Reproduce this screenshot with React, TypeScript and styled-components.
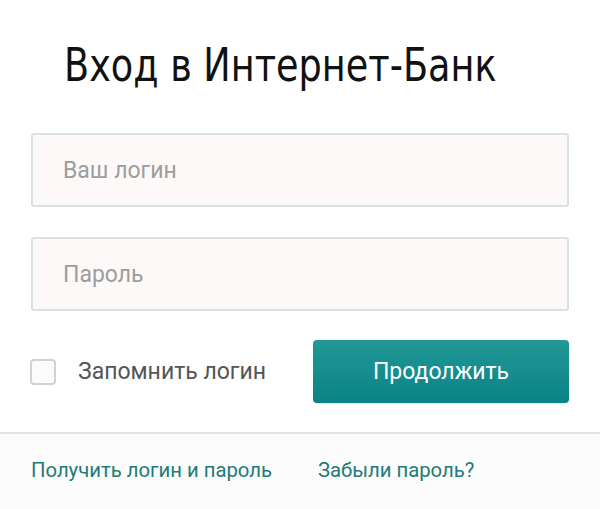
import React from "react";
import styled, { createGlobalStyle } from "styled-components";

const GlobalStyle = createGlobalStyle`
  html, body {
    margin: 0;
    padding: 0;
    background: #ffffff;
  }
  body {
    font-family: Roboto, "Liberation Sans", Arial, sans-serif;
    -webkit-font-smoothing: antialiased;
  }
  * { box-sizing: border-box; }
`;

const Page = styled.div`
  width: 600px;
  height: 509px;
  background: #ffffff;
  display: flex;
  flex-direction: column;
  overflow: hidden;
`;

const Main = styled.div`
  padding: 38px 31px 0 31px;
  display: flex;
  flex-direction: column;
`;

const Title = styled.h1`
  margin: 0 0 41px 33px;
  font-family: "DejaVu Sans Condensed", "Liberation Sans Narrow", "Liberation Sans", sans-serif;
  font-weight: 400;
  font-size: 46px;
  line-height: 54px;
  letter-spacing: 0;
  color: #111111;
  white-space: nowrap;
  transform: scaleX(0.885);
  transform-origin: left center;
`;

const Field = styled.input<{ $gap: number }>`
  display: block;
  width: 538px;
  height: 74px;
  margin: 0 0 ${(p) => p.$gap}px 0;
  padding: 0 0 0 30px;
  border: 2px solid #d9e1e1;
  border-radius: 3px;
  background: #fdf9f9;
  font-family: Roboto, "Liberation Sans", Arial, sans-serif;
  font-size: 23px;
  color: #333;
  outline: none;
  &::placeholder {
    color: #9d9d9d;
  }
`;

const ActionRow = styled.div`
  display: flex;
  align-items: center;
  justify-content: space-between;
  height: 63px;
`;

const RememberLabel = styled.label`
  display: flex;
  align-items: center;
  gap: 22px;
  font-size: 23px;
  color: #555555;
  cursor: pointer;
`;

const CheckBox = styled.span`
  display: inline-block;
  width: 26px;
  height: 26px;
  border: 2px solid #d2d2d2;
  border-radius: 4px;
  background: #fbfbfb;
  margin-left: -1px;
`;

const ContinueButton = styled.button`
  width: 256px;
  height: 63px;
  border: none;
  border-radius: 4px;
  background: linear-gradient(to bottom, #229897 0%, #0a8386 100%);
  color: #ffffff;
  font-family: Roboto, "Liberation Sans", Arial, sans-serif;
  font-size: 23px;
  cursor: pointer;
  box-shadow: 0 1px 1px rgba(0, 0, 0, 0.08);
`;

const Divider = styled.hr`
  margin: 29px 0 0 0;
  border: none;
  border-top: 2px solid #e2e4e4;
  width: 100%;
`;

const Footer = styled.div`
  flex: 1;
  background: #fcfcfc;
  padding: 24px 31px 0 31px;
  display: flex;
  gap: 46px;
`;

const FooterLink = styled.a`
  font-size: 20.3px;
  line-height: 24px;
  color: #217b79;
  text-decoration: none;
  white-space: nowrap;
`;

export default function App() {
  return (
    <>
      <GlobalStyle />
      <Page>
        <Main>
          <Title>Вход в Интернет-Банк</Title>
          <Field $gap={30} placeholder="Ваш логин" />
          <Field $gap={29} type="password" placeholder="Пароль" />
          <ActionRow>
            <RememberLabel>
              <CheckBox />
              Запомнить логин
            </RememberLabel>
            <ContinueButton>Продолжить</ContinueButton>
          </ActionRow>
        </Main>
        <Divider />
        <Footer>
          <FooterLink href="#">Получить логин и пароль</FooterLink>
          <FooterLink href="#">Забыли пароль?</FooterLink>
        </Footer>
      </Page>
    </>
  );
}
